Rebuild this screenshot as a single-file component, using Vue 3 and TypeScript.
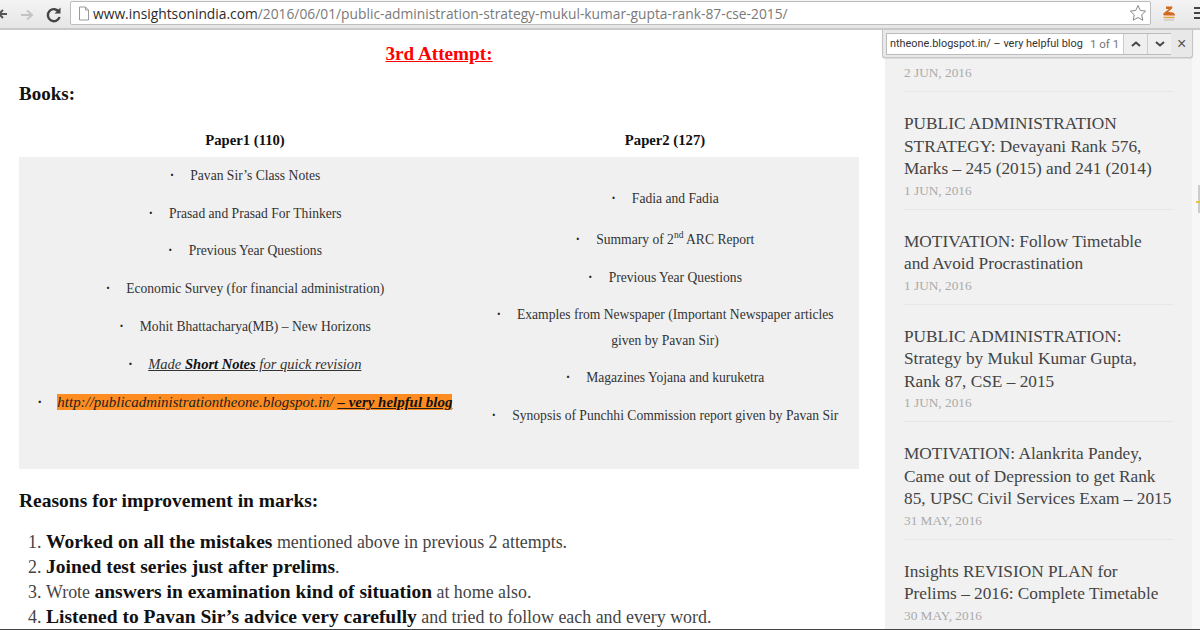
<script setup lang="ts">
interface Post { title: string[]; date: string }
const posts: Post[] = [
  { title: ['PUBLIC ADMINISTRATION', 'STRATEGY: Devayani Rank 576,', 'Marks – 245 (2015) and 241 (2014)'], date: '1 JUN, 2016' },
  { title: ['MOTIVATION: Follow Timetable', 'and Avoid Procrastination'], date: '1 JUN, 2016' },
  { title: ['PUBLIC ADMINISTRATION:', 'Strategy by Mukul Kumar Gupta,', 'Rank 87, CSE – 2015'], date: '1 JUN, 2016' },
  { title: ['MOTIVATION: Alankrita Pandey,', 'Came out of Depression to get Rank', '85, UPSC Civil Services Exam – 2015'], date: '31 MAY, 2016' },
  { title: ['Insights REVISION PLAN for', 'Prelims – 2016: Complete Timetable'], date: '30 MAY, 2016' },
]
const paper1 = ['Pavan Sir’s Class Notes', 'Prasad and Prasad For Thinkers', 'Previous Year Questions', 'Economic Survey (for financial administration)', 'Mohit Bhattacharya(MB) – New Horizons']
</script>

<template>
  <div class="page">
    <header class="toolbar">
      <svg class="nav" width="70" height="24" viewBox="0 0 70 24">
        <path d="M-2 13H7M3 9l-4 4 4 4" fill="none" stroke="#555" stroke-width="2"/>
        <path d="M21 14h10M27 9.500l5 4.500-5 4.500" fill="none" stroke="#c4c4c4" stroke-width="2"/>
        <path d="M59 11a6 6 0 1 0 .6 5" fill="none" stroke="#444" stroke-width="2.400"/>
        <path d="M60.500 6.500v6h-6z" fill="#444"/>
      </svg>
      <div class="omnibox">
        <svg class="doc" width="12" height="15" viewBox="0 0 12 15"><path d="M1.500 1h6l3 3v10h-9z M7.500 1v3h3" fill="#fff" stroke="#999"/></svg>
        <span class="url"><b>www.insightsonindia.com</b>/2016/06/01/public-administration-strategy-mukul-kumar-gupta-rank-87-cse-2015/</span>
        <svg class="star" width="18" height="18" viewBox="0 0 18 18"><path d="M9 1.500l2.300 5 5.400.6-4 3.700 1.100 5.400L9 13.500l-4.800 2.700 1.100-5.400-4-3.700 5.400-.6z" fill="#fff" stroke="#888"/></svg>
      </div>
      <svg class="ext" width="16" height="20" viewBox="0 0 16 20">
        <path d="M5 3.500h6.500L11 5.500 7 9c4 0 7 .5 7 3.500H4.500C2 12.500 1.500 11 3.500 9.500L8 6H5z" fill="#d2691e"/>
        <path d="M2.500 14.500h11" stroke="#e8a33c" stroke-width="1.500"/>
        <path d="M3 17h10" stroke="#bbb" stroke-width="1"/>
      </svg>
      <div class="menu"><i></i><i></i><i></i></div>
    </header>

    <div class="find">
      <div class="find-box">
        <span class="find-text">ntheone.blogspot.in/ – very helpful blog</span>
        <span class="find-count">1 of 1</span>
        <span class="find-btn"><svg width="12" height="8" viewBox="0 0 12 8"><path d="M2 6l4-3.500L10 6" fill="none" stroke="#444" stroke-width="2"/></svg></span>
        <span class="find-btn"><svg width="12" height="8" viewBox="0 0 12 8"><path d="M2 2l4 3.500L10 2" fill="none" stroke="#444" stroke-width="2"/></svg></span>
      </div>
      <span class="find-close">×</span>
    </div>

    <div class="body">
      <main class="article">
        <h2 class="attempt">3rd Attempt:</h2>
        <h3 class="books">Books:</h3>
        <div class="paper-heads">
          <div>Paper1 (110)</div>
          <div>Paper2 (127)</div>
        </div>
        <div class="table">
          <div class="col-left">
            <p v-for="item in paper1" :key="item"><span class="dot">·</span>{{ item }}</p>
            <p class="notes"><span class="dot">·</span><u>Made <b>Short Notes</b> for quick revision</u></p>
            <p class="link"><span class="dot">·</span><mark>http://publicadministrationtheone.blogspot.in/ <u><b>– very helpful blog</b></u></mark></p>
          </div>
          <div class="col-right">
            <p><span class="dot">·</span>Fadia and Fadia</p>
            <p class="summary"><span class="dot">·</span>Summary of 2<sup>nd</sup> ARC Report</p>
            <p><span class="dot">·</span>Previous Year Questions</p>
            <p class="wrap"><span class="dot">·</span>Examples from Newspaper (Important Newspaper articles<br>given by Pavan Sir)</p>
            <p><span class="dot">·</span>Magazines Yojana and kuruketra</p>
            <p><span class="dot">·</span>Synopsis of Punchhi Commission report given by Pavan Sir</p>
          </div>
        </div>
        <h3 class="reasons">Reasons for improvement in marks:</h3>
        <ol class="list">
          <li><b>Worked on all the mistakes</b> mentioned above in previous 2 attempts.</li>
          <li><b>Joined test series just after prelims</b>.</li>
          <li>Wrote <b>answers in examination kind of situation</b> at home also.</li>
          <li><b>Listened to Pavan Sir’s advice very carefully</b> and tried to follow each and every word.</li>
        </ol>
      </main>

      <aside class="sidebar">
        <div class="first-date">2 JUN, 2016</div>
        <article v-for="post in posts" :key="post.date + post.title[0]" class="post">
          <div class="post-title"><div v-for="line in post.title" :key="line">{{ line }}</div></div>
          <div class="post-date">{{ post.date }}</div>
        </article>
      </aside>
      <div class="scroll"><span class="mark"></span><span class="tick"></span></div>
    </div>
  </div>
</template>

<style>
html, body { margin: 0; background: #fff; }
</style>

<style scoped>
.page { position: relative; width: 1200px; height: 630px; overflow: hidden; background: #fff; border-bottom: 1px solid #444; box-sizing: border-box; font-family: "Liberation Serif", serif; color: #222; display: flex; flex-direction: column; }
.toolbar { height: 28px; flex: none; display: flex; align-items: center; background: linear-gradient(#f4f4f4, #e6e6e6); border-bottom: 2px solid #c9c9c9; box-sizing: content-box; }
.nav { flex: none; margin-top: -2px; }
.omnibox { width: 1081px; margin-left: 0; height: 24px; margin-top: -2px; background: #fff; border: 1px solid #bdbdbd; border-radius: 2px; display: flex; align-items: center; box-sizing: border-box; padding-left: 7px; flex: none; }
.doc { flex: none; }
.url { margin-left: 3px; font: 13.800px "Open Sans", sans-serif; color: #7a7a7a; white-space: nowrap; flex: 1; }
.url b { font-weight: 400; color: #2c2c2c; }
.star { flex: none; margin-right: 3px; }
.ext { flex: none; margin-left: 10px; margin-top: -2px; }
.menu { margin-left: 17px; margin-top: -2px; display: flex; flex-direction: column; gap: 2.500px; flex: none; }
.menu i { display: block; width: 13px; height: 2.500px; background: #444; }

.find { position: absolute; left: 882px; top: 30px; width: 311px; height: 28px; box-sizing: border-box; background: #e8e8e8; border: 1px solid #c4c4c4; border-top: 0; border-radius: 0 0 3px 3px; display: flex; align-items: center; padding-left: 3px; z-index: 2; box-shadow: 0 1px 1px #ddd; }
.find-box { width: 285px; height: 22px; background: #fff; border: 1px solid #bcbcbc; box-sizing: border-box; display: flex; align-items: center; font: 10.900px Roboto, sans-serif; color: #333; flex: none; }
.find-text { padding-left: 3px; width: 203px; box-sizing: border-box; white-space: nowrap; overflow: hidden; flex: none; }
.find-count { color: #777; width: 33px; flex: none; white-space: nowrap; font-size: 11.500px; }
.find-btn { width: 24px; height: 20px; border-left: 1px solid #ccc; background: #efefef; box-sizing: border-box; display: flex; align-items: center; justify-content: center; flex: none; }
.find-close { margin-left: 6px; color: #555; font: 16px "Liberation Sans", sans-serif; }

.body { flex: 1; min-height: 0; display: flex; }
.article { width: 885px; flex: none; padding-left: 19px; box-sizing: border-box; }
.attempt { margin: 13px 0 0; width: 840px; text-align: center; font-size: 19.200px; line-height: 21px; color: #f00; text-decoration: underline; font-weight: 700; }
.books { margin: 19px 0 0; font-size: 19px; line-height: 22px; color: #111; }
.paper-heads { display: grid; grid-template-columns: 452px 388px; width: 840px; margin-top: 26px; font-size: 14.700px; font-weight: 700; line-height: 18px; text-align: center; color: #111; }
.table { display: grid; grid-template-columns: 452px 388px; width: 840px; background: #f0f0f0; height: 312px; margin-top: 8px; font-size: 13.600px; color: #333; }
.table p { margin: 0; text-align: center; line-height: 20px; white-space: nowrap; }
.dot { margin-right: 16px; font-weight: 700; color: #222; }
.col-left { padding-top: 9px; display: flex; flex-direction: column; gap: 17.700px; }
.col-right { padding-top: 32px; display: flex; flex-direction: column; gap: 18px; }
.col-right .summary { line-height: 26px; margin-bottom: -3px; }
.col-right .wrap { line-height: 26px; margin: -4px 0; }
.col-right sup { font-size: 9.500px; line-height: 0; }
.table .notes { font-style: italic; font-size: 14.550px; }
.table .link { font-style: italic; font-size: 14.950px; }
.notes b, .link b { color: #111; }
mark { background: #ff8c20; color: #222; }
.reasons { margin: 21px 0 0; font-size: 19.500px; line-height: 22px; color: #111; }
.list { margin: 18px 0 0; padding-left: 27px; font-size: 17.900px; line-height: 25px; color: #444; }
.list b { color: #111; font-size: 19.500px; line-height: 1; }

.sidebar { width: 307px; flex: none; background: #f1f1f1; box-sizing: border-box; padding: 0 19px; overflow: hidden; }
.first-date { margin-top: 35px; font-size: 13.300px; line-height: 16px; color: #aaa; padding-bottom: 10px; border-bottom: 1px solid #e6e6e6; }
.post { padding: 21px 0 10px; border-bottom: 1px solid #e6e6e6; }
.post-title { font-size: 17.300px; line-height: 22.500px; color: #444; white-space: nowrap; }
.post-date { margin-top: 2px; font-size: 13.300px; line-height: 16px; color: #aaa; }
.scroll { flex: 1; background: #f7f7f7; position: relative; }
.mark { position: absolute; left: 6px; top: 155px; width: 2px; height: 28px; background: #ccc; }
.tick { position: absolute; left: 4px; top: 171px; width: 4px; height: 2px; background: #e5c63c; }
</style>
